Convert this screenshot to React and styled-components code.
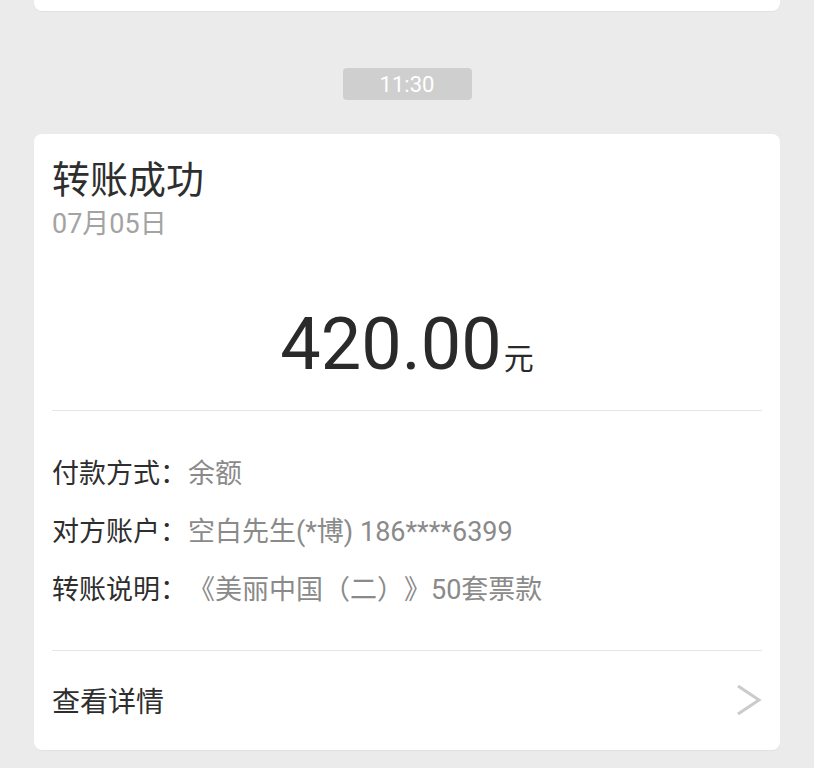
import React from "react";
import styled, { createGlobalStyle } from "styled-components";

const GlobalStyle = createGlobalStyle`
  html, body {
    margin: 0;
    padding: 0;
    background: #ebebeb;
  }
  body {
    font-family: Roboto, "Noto Sans CJK SC", sans-serif;
    text-spacing-trim: space-all;
  }
`;

const rows = [
  { label: "付款方式：", value: "余额" },
  { label: "对方账户：", value: "空白先生(*博) 186****6399" },
  { label: "转账说明：", value: "《美丽中国（二）》50套票款" },
];

function App() {
  return (
    <Page>
      <GlobalStyle />
      <PrevCard />
      <TimeRow>
        <TimePill>11:30</TimePill>
      </TimeRow>
      <Card>
        <Title>转账成功</Title>
        <DateText>07月05日</DateText>
        <AmountRow>
          <Amount>420.00</Amount>
          <Unit>元</Unit>
        </AmountRow>
        <Divider />
        <Rows>
          {rows.map((row) => (
            <InfoRow key={row.label}>
              <Label>{row.label}</Label>
              <Value>{row.value}</Value>
            </InfoRow>
          ))}
        </Rows>
        <Divider />
        <Footer>
          <FooterText>查看详情</FooterText>
          <svg width="28" height="32" viewBox="0 0 28 32">
            <polyline
              points="4,2 25,16 4,30"
              fill="none"
              stroke="#cbcbcb"
              strokeWidth="3"
            />
          </svg>
        </Footer>
      </Card>
    </Page>
  );
}

const Page = styled.div`
  width: 814px;
  height: 768px;
  overflow: hidden;
  display: flex;
  flex-direction: column;
`;

const PrevCard = styled.div`
  margin: 0 34px;
  height: 11px;
  background: #fff;
  border-radius: 0 0 8px 8px;
  box-shadow: 0 1px 1px rgba(0, 0, 0, 0.04);
`;

const TimeRow = styled.div`
  display: flex;
  justify-content: center;
  margin-top: 57px;
`;

const TimePill = styled.div`
  width: 129px;
  height: 32px;
  border-radius: 4px;
  background: #cfcfcf;
  color: #fff;
  font-size: 22px;
  line-height: 33px;
  text-align: center;
`;

const Card = styled.div`
  margin: 34px 34px 0;
  height: 616px;
  box-sizing: border-box;
  padding: 22px 18px 0;
  background: #fff;
  border-radius: 8px;
  box-shadow: 0 1px 1px rgba(0, 0, 0, 0.04);
  display: flex;
  flex-direction: column;
`;

const Title = styled.div`
  font-size: 38px;
  line-height: 48px;
  color: #2e2e2e;
`;

const DateText = styled.div`
  font-size: 27px;
  line-height: 40px;
  color: #a3a3a3;
`;

const AmountRow = styled.div`
  display: flex;
  justify-content: center;
  align-items: baseline;
  margin: 61px 0 11px;
  line-height: 80px;
`;

const Amount = styled.span`
  font-size: 72px;
  color: #2a2a2a;
`;

const Unit = styled.span`
  font-size: 30px;
  color: #2a2a2a;
  margin-left: 2px;
`;

const Divider = styled.div`
  height: 1px;
  background: #e6e6e6;
`;

const Rows = styled.div`
  padding: 31px 0 34px;
  display: flex;
  flex-direction: column;
`;

const InfoRow = styled.div`
  display: flex;
  height: 58px;
  align-items: center;
  font-size: 27px;
`;

const Label = styled.span`
  color: #2e2e2e;
`;

const Value = styled.span`
  color: #8a8a8a;
  margin-left: 1px;
`;

const Footer = styled.div`
  flex: 1;
  display: flex;
  align-items: center;
  justify-content: space-between;
  padding-bottom: 2px;
`;

const FooterText = styled.span`
  font-size: 28px;
  color: #2e2e2e;
`;

export default App;
